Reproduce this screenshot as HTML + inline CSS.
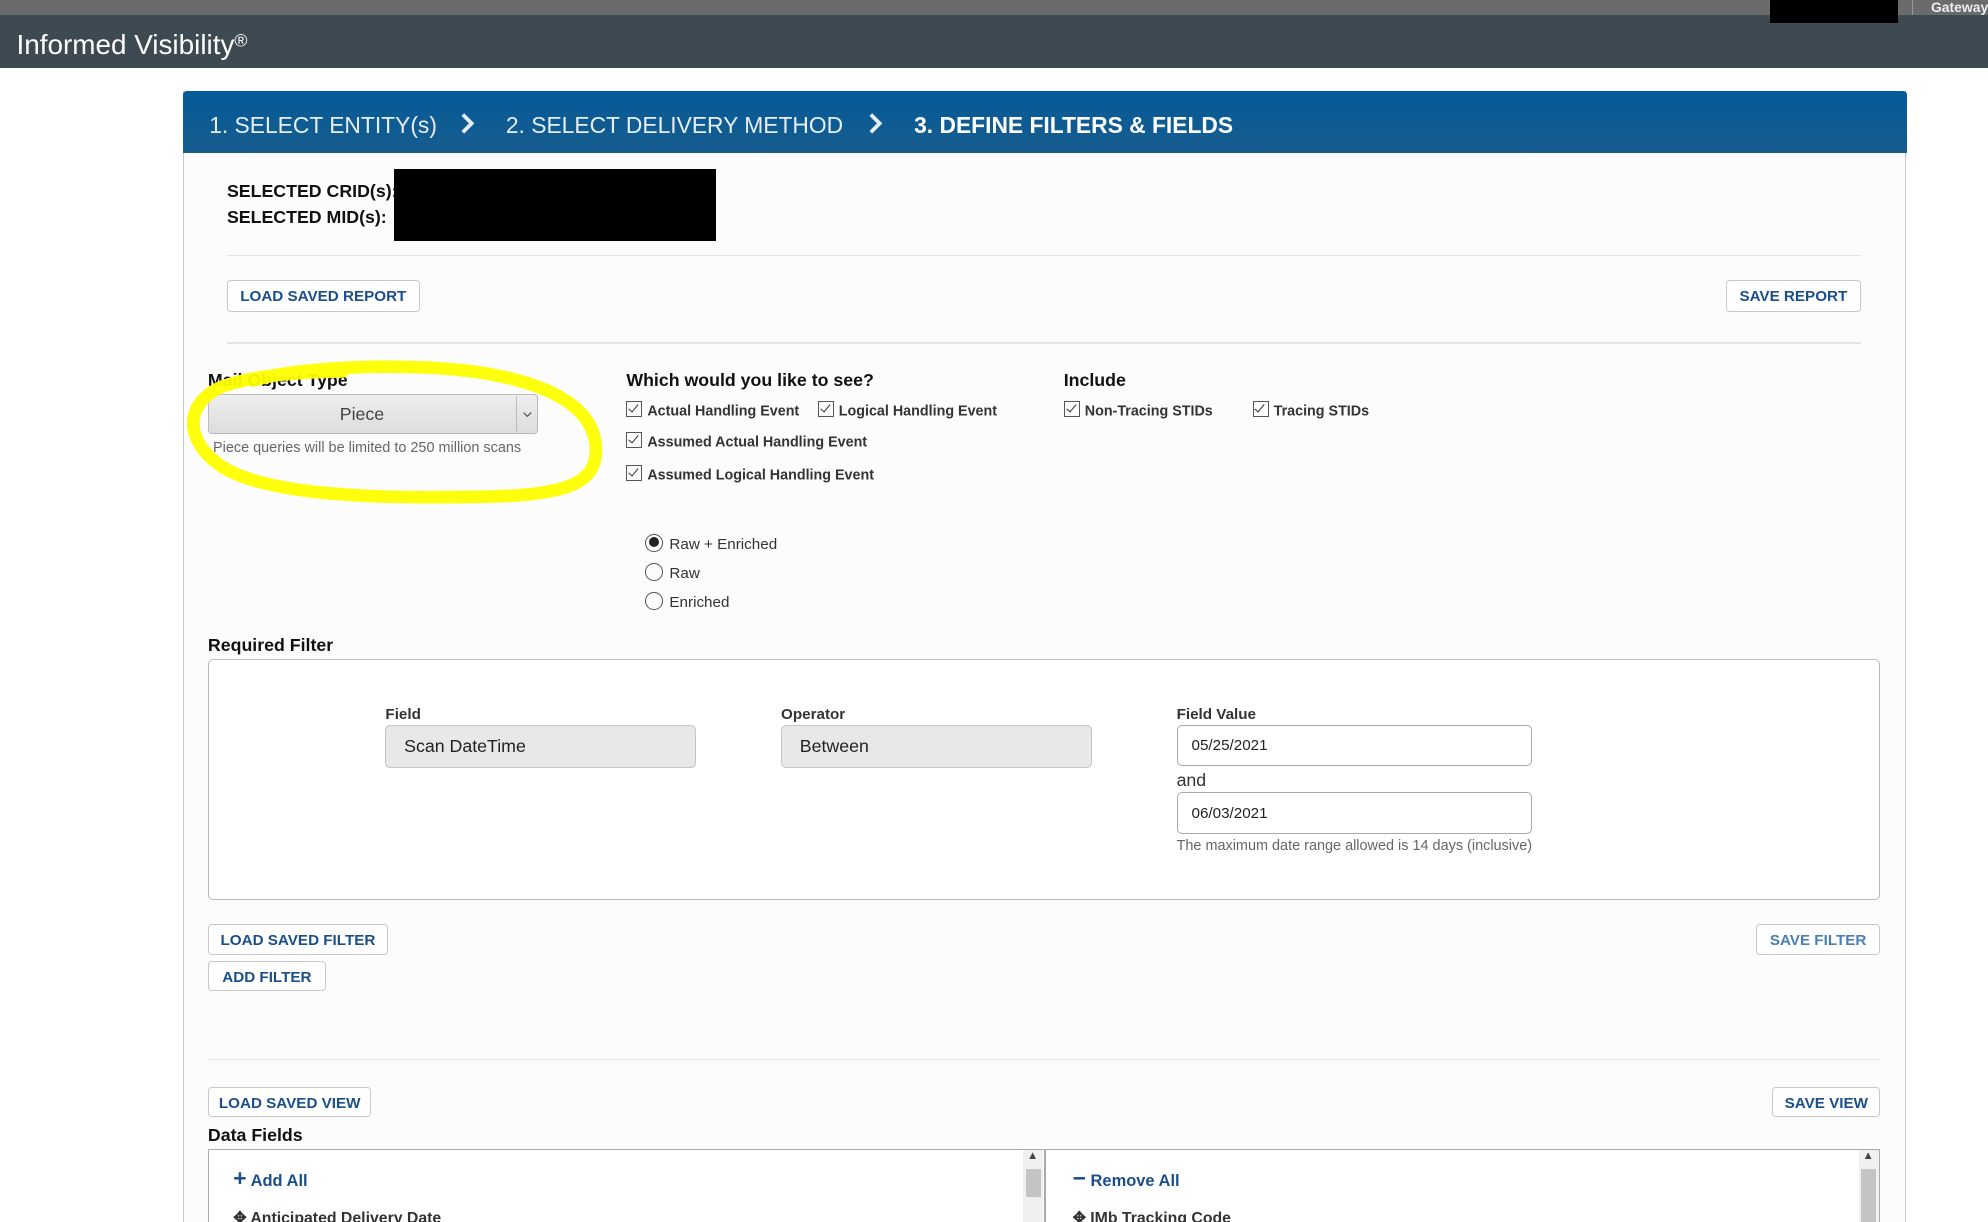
<!DOCTYPE html>
<html><head><meta charset="utf-8"><style>
html,body{margin:0;padding:0;overflow:hidden}
body{zoom:1.26786;width:1568px;height:964px;position:relative;background:#fff;font-family:"Liberation Sans",Arial,sans-serif;color:#222}
.a{position:absolute}
.btn{position:absolute;border:1px solid #c8c8c8;border-radius:3px;background:#fff;color:#1a4f8b;font-weight:bold;font-size:12px;text-align:center;box-sizing:border-box;line-height:26px}
.lbl{position:absolute;font-weight:bold;font-size:14px;color:#111}
.cb{position:absolute;font-size:11.3px;color:#333;font-weight:bold}
.cb i{display:inline-block;width:11px;height:11px;border:1px solid #555;vertical-align:-1px;margin-right:4px;position:relative;font-style:normal}
.cb i:after{content:"";position:absolute;left:3px;top:0px;width:3px;height:7px;border:solid #333;border-width:0 1px 1px 0;transform:rotate(40deg)}
.rd{position:absolute;font-size:12px;color:#333}
.rd i{display:inline-block;width:14px;height:14px;border:1px solid #555;border-radius:50%;vertical-align:-2px;margin-right:5px;position:relative;box-sizing:border-box}
.rd i.on:after{content:"";position:absolute;left:2px;top:2px;width:8px;height:8px;border-radius:50%;background:#222}
.hr{position:absolute;height:1px;background:#e4e4e4}
.inp{position:absolute;border:1px solid #c4c4c4;border-radius:4px;box-sizing:border-box;font-size:14px;padding-left:14px;line-height:32px}
.sm{position:absolute;font-size:12px;font-weight:bold;color:#333}
</style></head><body>
<div class="a" style="left:0;top:0;width:1568px;height:12px;background:#6b6b6b"></div>
<div class="a" style="left:0;top:12px;width:1568px;height:42px;background:#3d4a52"></div>
<div class="a" style="left:1396px;top:0;width:101px;height:18px;background:#000"></div>
<div class="a" style="left:1508px;top:0;width:1px;height:12px;background:#999"></div>
<div class="a" style="left:1523px;top:-1px;font-size:11px;color:#eee;font-weight:bold">Gateway</div>
<div class="a" style="left:13px;top:23px;font-size:22px;color:#fff">Informed Visibility<span style="font-size:14px;vertical-align:6px">®</span></div>

<div class="a" style="left:144px;top:72px;width:1358px;height:900px;background:#fcfcfc;border:1px solid #c8c8c8;border-top:none"></div>
<div class="a" style="left:144px;top:72px;width:1360px;height:49px;background:linear-gradient(#045a98,#175d8e);border-radius:3px 3px 0 0"></div>
<div class="a" style="left:165px;top:88px;font-size:18px;color:#e8eef5">1. SELECT ENTITY(s)</div>
<svg class="a" style="left:362px;top:88px" width="14" height="18"><path d="M3,2 L10,9 L3,16" fill="none" stroke="#e8eef5" stroke-width="3"/></svg>
<div class="a" style="left:399px;top:88px;font-size:18px;color:#e8eef5">2. SELECT DELIVERY METHOD</div>
<svg class="a" style="left:684px;top:88px" width="14" height="18"><path d="M3,2 L10,9 L3,16" fill="none" stroke="#e8eef5" stroke-width="3"/></svg>
<div class="a" style="left:721px;top:88px;font-size:18px;color:#fff;font-weight:bold">3. DEFINE FILTERS &amp; FIELDS</div>

<div class="lbl" style="left:179px;top:143px">SELECTED CRID(s):</div>
<div class="lbl" style="left:179px;top:163px">SELECTED MID(s):</div>
<div class="a" style="left:311px;top:133px;width:254px;height:57px;background:#000"></div>
<div class="hr" style="left:179px;top:201px;width:1289px"></div>
<div class="btn" style="left:179px;top:221px;width:152px;height:25px">LOAD SAVED REPORT</div>
<div class="btn" style="left:1361px;top:221px;width:107px;height:25px">SAVE REPORT</div>
<div class="hr" style="left:179px;top:270px;width:1289px"></div>

<div class="lbl" style="left:164px;top:292px">Mail Object Type</div>
<div class="a" style="left:164px;top:311px;width:260px;height:31px;border:1px solid #bbb;border-radius:3px;background:linear-gradient(#eee,#ddd);box-sizing:border-box"></div>
<div class="a" style="left:164px;top:319px;width:243px;text-align:center;font-size:14px;color:#444">Piece</div>
<div class="a" style="left:407px;top:312px;width:1px;height:29px;background:#bbb"></div>
<svg class="a" style="left:411px;top:323px" width="10" height="8"><path d="M2,2 L5,5 L8,2" fill="none" stroke="#555" stroke-width="1"/></svg>
<div class="a" style="left:168px;top:347px;font-size:11.4px;color:#666">Piece queries will be limited to 250 million scans</div>
<svg class="a" style="left:0;top:0" width="600" height="420"><path d="M200,300 C240,288 330,286 380,294 C430,302 470,320 470,355 C470,385 440,392 360,392 C290,393 210,390 175,368 C145,348 145,318 175,305 C200,296 240,293 270,293" fill="none" stroke="#ffff00" stroke-width="10" stroke-linecap="round" opacity=".95"/></svg>

<div class="lbl" style="left:494px;top:292px">Which would you like to see?</div>
<div class="cb" style="left:494px;top:316px"><i></i>Actual Handling Event</div>
<div class="cb" style="left:645px;top:316px"><i></i>Logical Handling Event</div>
<div class="cb" style="left:494px;top:341px"><i></i>Assumed Actual Handling Event</div>
<div class="cb" style="left:494px;top:367px"><i></i>Assumed Logical Handling Event</div>
<div class="lbl" style="left:839px;top:292px">Include</div>
<div class="cb" style="left:839px;top:316px"><i></i>Non-Tracing STIDs</div>
<div class="cb" style="left:988px;top:316px"><i></i>Tracing STIDs</div>
<div class="rd" style="left:509px;top:421px"><i class="on"></i>Raw + Enriched</div>
<div class="rd" style="left:509px;top:444px"><i></i>Raw</div>
<div class="rd" style="left:509px;top:467px"><i></i>Enriched</div>

<div class="lbl" style="left:164px;top:501px">Required Filter</div>
<div class="a" style="left:164px;top:520px;width:1319px;height:190px;border:1px solid #bbb;border-radius:4px;background:#fff;box-sizing:border-box"></div>
<div class="sm" style="left:304px;top:557px">Field</div>
<div class="inp" style="left:304px;top:572px;width:245px;height:34px;background:#e8e8e8">Scan DateTime</div>
<div class="sm" style="left:616px;top:557px">Operator</div>
<div class="inp" style="left:616px;top:572px;width:245px;height:34px;background:#e8e8e8">Between</div>
<div class="sm" style="left:928px;top:557px">Field Value</div>
<div class="inp" style="left:928px;top:572px;width:280px;height:32px;font-size:12px;padding-left:11px;line-height:32px;border-color:#aaa">05/25/2021</div>
<div class="a" style="left:928px;top:607px;font-size:14px;color:#333">and</div>
<div class="inp" style="left:928px;top:625px;width:280px;height:33px;font-size:12px;padding-left:11px;line-height:33px;border-color:#aaa">06/03/2021</div>
<div class="a" style="left:928px;top:661px;font-size:11.4px;color:#666">The maximum date range allowed is 14 days (inclusive)</div>

<div class="btn" style="left:164px;top:729px;width:142px;height:24px;line-height:25px">LOAD SAVED FILTER</div>
<div class="btn" style="left:164px;top:758px;width:93px;height:24px;line-height:25px">ADD FILTER</div>
<div class="btn" style="left:1385px;top:729px;width:98px;height:24px;line-height:25px;color:#4a7fb5">SAVE FILTER</div>
<div class="hr" style="left:164px;top:835px;width:1319px"></div>
<div class="btn" style="left:164px;top:857px;width:129px;height:24px;line-height:25px">LOAD SAVED VIEW</div>
<div class="btn" style="left:1398px;top:857px;width:85px;height:24px;line-height:25px">SAVE VIEW</div>
<div class="lbl" style="left:164px;top:887px">Data Fields</div>
<div class="a" style="left:164px;top:906px;width:660px;height:80px;border:1px solid #aaa;background:#fff;box-sizing:border-box"></div>
<div class="a" style="left:824px;top:906px;width:659px;height:80px;border:1px solid #aaa;background:#fff;box-sizing:border-box"></div>
<div class="a" style="left:807px;top:907px;width:16px;height:60px;background:#f0f0f0"></div>
<div class="a" style="left:809px;top:922px;width:12px;height:22px;background:#c4c4c4"></div>
<div class="a" style="left:810px;top:907px;font-size:9px;color:#444">▲</div>
<div class="a" style="left:1466px;top:907px;width:16px;height:60px;background:#f0f0f0"></div>
<div class="a" style="left:1468px;top:922px;width:12px;height:42px;background:#c4c4c4"></div>
<div class="a" style="left:1469px;top:907px;font-size:9px;color:#444">▲</div>
<div class="a" style="left:184px;top:923px;font-size:13px;font-weight:bold;color:#1a4f8b"><span style="font-size:18px;line-height:13px">+</span> Add All</div>
<div class="a" style="left:184px;top:953px;font-size:12.5px;font-weight:bold;color:#333">✥ Anticipated Delivery Date</div>
<div class="a" style="left:846px;top:923px;font-size:13px;font-weight:bold;color:#1a4f8b"><span style="font-size:18px;line-height:13px">−</span> Remove All</div>
<div class="a" style="left:846px;top:953px;font-size:12.5px;font-weight:bold;color:#333">✥ IMb Tracking Code</div>
</body></html>
